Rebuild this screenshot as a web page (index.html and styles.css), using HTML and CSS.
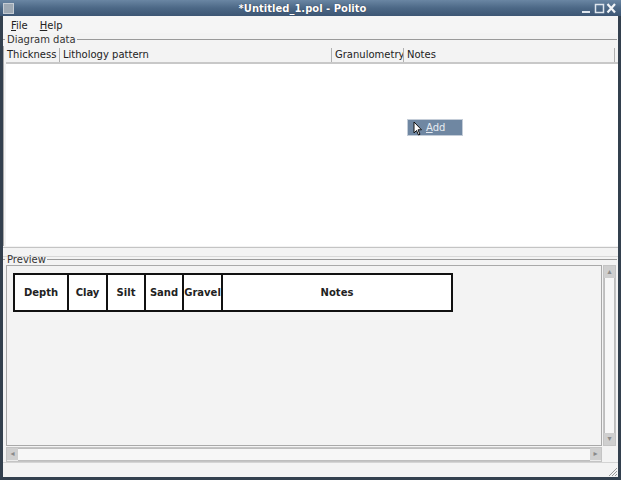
FILE: index.html
```html
<!DOCTYPE html>
<html lang="en">
<head>
    <meta charset="UTF-8">
    <title>Polito</title>
    <link rel="stylesheet" href="styles.css">
</head>
<body>
    <div class="window">
        <div class="titlebar">
            <span class="app-icon"></span>
            <span class="title">*Untitled_1.pol - Polito</span>
            <span class="win-btns">
                <svg width="36" height="12" viewBox="0 0 36 12">
                    <rect x="1" y="9" width="8" height="2" fill="#dfe6ee"/>
                    <rect x="14.5" y="2.5" width="8" height="8" fill="none" stroke="#dfe6ee" stroke-width="1.5"/>
                    <path d="M26.5 2 L34 10.5 M34 2 L26.5 10.5" stroke="#f2f5f8" stroke-width="2.2"/>
                </svg>
            </span>
        </div>

        <div class="menubar">
            <span class="menu"><u>F</u>ile</span>
            <span class="menu"><u>H</u>elp</span>
        </div>

        <div class="group-title"><span class="tick"></span><span class="label">Diagram data</span><span class="rule"></span></div>

        <div class="data-area">
            <div class="grid-head">
                <div class="col c-thick">Thickness</div>
                <div class="col c-lith">Lithology pattern</div>
                <div class="col c-gran">Granulometry</div>
                <div class="col c-notes">Notes</div>
            </div>
            <div class="grid-body">
                <div class="popup">
                    <svg class="cursor" width="10" height="15" viewBox="0 0 10 15">
                        <path d="M1 1 L1 12 L3.5 9.5 L5.5 14 L7 13.3 L5 8.8 L8.5 8.8 Z" fill="#fff" stroke="#111" stroke-width="1"/>
                    </svg>
                    <span class="popup-text"><u>A</u>dd</span>
                </div>
            </div>
        </div>

        <div class="splitter"><span class="grip"></span></div>

        <div class="group-title preview-title"><span class="tick"></span><span class="label">Preview</span><span class="rule"></span></div>

        <div class="scroll-pane">
            <div class="scroll-main">
                <div class="viewport">
                    <table class="strat">
                        <tr>
                            <td class="w-depth">Depth</td>
                            <td class="w-clay">Clay</td>
                            <td class="w-silt">Silt</td>
                            <td class="w-sand">Sand</td>
                            <td class="w-gravel">Gravel</td>
                            <td class="w-notes">Notes</td>
                        </tr>
                    </table>
                </div>
                <div class="vbar">
                    <span class="arrow up">&#9652;</span>
                    <span class="vtrack"><span class="vgrip"></span></span>
                    <span class="arrow down">&#9662;</span>
                </div>
            </div>
            <div class="hbar-row">
                <div class="hbar">
                    <span class="arrow left">&#9666;</span>
                    <span class="htrack"><span class="hgrip"></span></span>
                    <span class="arrow right">&#9656;</span>
                </div>
                <div class="corner"></div>
            </div>
        </div>

        <div class="status">
            <svg class="resize" width="12" height="12" viewBox="0 0 12 12">
                <path d="M11 3 L3 11 M11 6 L6 11 M11 9 L9 11" stroke="#9a9a9a" stroke-width="1"/>
            </svg>
        </div>
    </div>
</body>
</html>
```

FILE: styles.css
```css
* {
    box-sizing: border-box;
}
body {
    margin: 0;
    font-family: 'DejaVu Sans', Verdana, sans-serif;
    font-size: 10px;
    color: #222;
    background: #2e3a48;
}
.window {
    width: 621px;
    height: 480px;
    display: flex;
    flex-direction: column;
    background: #f3f3f3;
    border-left: 3px solid #33404e;
    border-right: 3px solid #33404e;
    border-bottom: 3px solid #33404e;
}
.titlebar {
    height: 16px;
    margin: 0 -3px;
    display: flex;
    align-items: center;
    background: linear-gradient(#6a86a3, #4c6886 50%, #3d5674);
    color: #fff;
}
.app-icon {
    width: 11px;
    height: 11px;
    margin-left: 3px;
    background: #9ea9b4;
    border: 1px solid #c5ccd4;
}
.title {
    flex: 1;
    text-align: center;
    font-weight: bold;
    font-size: 10px;
    text-shadow: 0 0 1px #223;
    padding-left: 10px;
}
.win-btns {
    width: 40px;
    display: flex;
    align-items: center;
}
.menubar {
    height: 17px;
    display: flex;
    align-items: center;
    padding: 1px 0 0 8px;
    gap: 12px;
    background: #f5f5f5;
}
.group-title {
    height: 13px;
    display: flex;
    align-items: center;
    color: #333;
}
.group-title .tick {
    width: 2px;
    height: 1px;
    background: #9a9a9a;
}
.group-title .label {
    padding: 0 1px 0 2px;
}
.group-title .rule {
    flex: 1;
    height: 1px;
    background: #9a9a9a;
    margin-right: 1px;
}
.data-area {
    flex: 1;
    display: flex;
    flex-direction: column;
    border-left: 1px solid #a8a8a8;
}
.grid-head {
    height: 18px;
    display: flex;
    background: #f3f3f3;
    border-bottom: 2px solid #c8c8c8;
    margin-left: 2px;
    padding-top: 2px;
}
.col {
    padding-left: 3px;
    line-height: 14px;
    border-right: 1px solid #b0b0b0;
    white-space: nowrap;
    overflow: hidden;
}
.c-thick { width: 54px; padding-left: 1px; }
.c-lith { width: 272px; }
.c-gran { width: 72px; }
.c-notes { width: 211px; }
.grid-body {
    flex: 1;
    background: #fff;
    position: relative;
    margin-left: 2px;
}
.popup {
    position: absolute;
    left: 401px;
    top: 55px;
    width: 56px;
    height: 17px;
    background: #6f87a2;
    border: 1px solid #c4cdd8;
    display: flex;
    align-items: center;
}
.popup .cursor {
    margin-left: 5px;
    margin-top: 2px;
}
.popup-text {
    color: #e6ebf1;
    margin-left: 3px;
}
.splitter {
    height: 10px;
    display: flex;
    justify-content: center;
    align-items: center;
    border-top: 1px solid #c4c4c4;
    border-bottom: 1px solid #d8d8d8;
    margin-top: 1px;
}
.grip {
    width: 14px;
    height: 4px;
    margin-left: 6px;
    background-image: radial-gradient(#8a8a8a 45%, transparent 50%);
    background-size: 2px 2px;
}
.preview-title {
    height: 8px;
    margin-top: -2px;
    margin-bottom: 2px;
}
.scroll-pane {
    height: 197px;
    margin: 0 2px 0 3px;
    display: flex;
    flex-direction: column;
}
.scroll-main {
    flex: 1;
    display: flex;
}
.viewport {
    flex: 1;
    background: #f3f3f3;
    border: 1px solid #a9a9a9;
    padding: 7px 0 0 6px;
}
.strat {
    border-collapse: collapse;
    table-layout: fixed;
    width: 438px;
    background: #fff;
    height: 39px;
}
.strat td {
    border: 2px solid #111;
    text-align: center;
    font-weight: bold;
    color: #222;
    padding: 0;
    white-space: nowrap;
}
.w-depth { width: 54px; }
.w-clay { width: 39px; }
.w-silt { width: 38px; }
.w-sand { width: 38px; }
.w-gravel { width: 39px; }
.w-notes { width: 230px; }
.vbar {
    width: 13px;
    display: flex;
    flex-direction: column;
    background: #ececec;
    border: 1px solid #c4c4c4;
    margin-left: 1px;
}
.arrow {
    display: flex;
    align-items: center;
    justify-content: center;
    width: 11px;
    height: 12px;
    background: #cfcfcf;
    color: #8a8a8a;
    font-size: 8px;
    line-height: 1;
}
.vtrack {
    flex: 1;
    display: flex;
    align-items: center;
    justify-content: center;
    background: #f7f7f7;
    border-left: 1px solid #bdbdbd;
    border-right: 1px solid #bdbdbd;
}
.vgrip {
    width: 4px;
    height: 14px;
    background-image: radial-gradient(#8a8a8a 45%, transparent 50%);
    background-size: 2px 2px;
}
.hbar-row {
    height: 16px;
    display: flex;
}
.hbar {
    flex: 1;
    display: flex;
    background: #ececec;
    border: 1px solid #c4c4c4;
    margin-top: 1px;
}
.htrack {
    flex: 1;
    display: flex;
    align-items: center;
    justify-content: center;
    background: #f7f7f7;
    border-top: 1px solid #bdbdbd;
    border-bottom: 1px solid #bdbdbd;
}
.hgrip {
    width: 14px;
    height: 4px;
    background-image: radial-gradient(#8a8a8a 45%, transparent 50%);
    background-size: 2px 2px;
}
.corner {
    width: 14px;
}
.status {
    height: 15px;
    display: flex;
    justify-content: flex-end;
    align-items: flex-end;
    border-top: 1px solid #d4d4d4;
}
```
